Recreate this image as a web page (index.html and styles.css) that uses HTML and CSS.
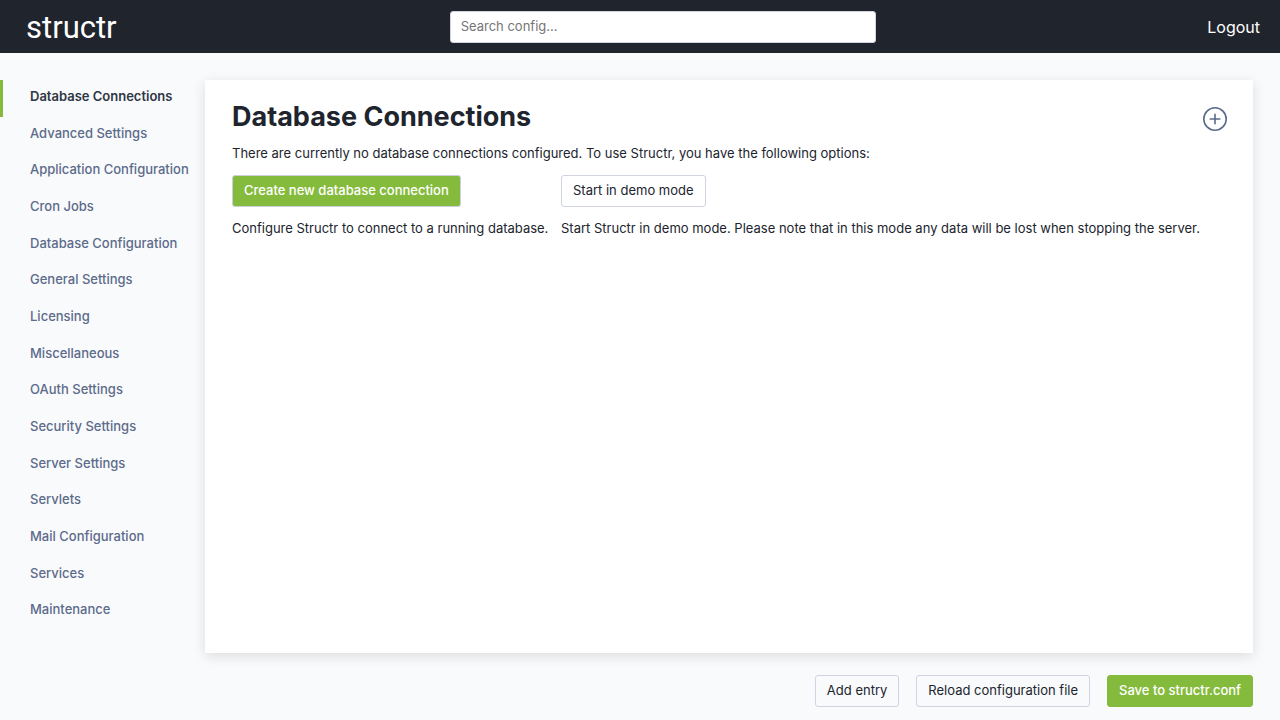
FILE: index.html
```html
<!DOCTYPE html>
<html lang="en">
<head>
<meta charset="utf-8">
<meta name="viewport" content="width=device-width, initial-scale=1">
<title>Structr Configuration</title>
<link rel="stylesheet" href="styles.css">
</head>
<body>
<header class="header">
  <svg class="logo" viewBox="0 0 92 44" role="img" aria-label="structr"><text class="logo-text" x="0" y="33">structr</text></svg>
  <input class="search" type="text" placeholder="Search config..." aria-label="Search config">
  <a class="logout" href="#">Logout</a>
</header>
<div class="body">
  <nav class="sidebar">
    <ul class="menu">
      <li class="menu-item active"><a href="#">Database Connections</a></li>
      <li class="menu-item"><a href="#">Advanced Settings</a></li>
      <li class="menu-item"><a href="#">Application Configuration</a></li>
      <li class="menu-item"><a href="#">Cron Jobs</a></li>
      <li class="menu-item"><a href="#">Database Configuration</a></li>
      <li class="menu-item"><a href="#">General Settings</a></li>
      <li class="menu-item"><a href="#">Licensing</a></li>
      <li class="menu-item"><a href="#">Miscellaneous</a></li>
      <li class="menu-item"><a href="#">OAuth Settings</a></li>
      <li class="menu-item"><a href="#">Security Settings</a></li>
      <li class="menu-item"><a href="#">Server Settings</a></li>
      <li class="menu-item"><a href="#">Servlets</a></li>
      <li class="menu-item"><a href="#">Mail Configuration</a></li>
      <li class="menu-item"><a href="#">Services</a></li>
      <li class="menu-item"><a href="#">Maintenance</a></li>
    </ul>
  </nav>
  <main class="main">
    <section class="panel">
      <div class="panel-head">
        <h1 class="title">Database Connections</h1>
        <button class="add" type="button" aria-label="Add connection">
          <svg width="26" height="26" viewBox="0 0 26 26" fill="none" stroke="currentColor" stroke-width="1.6" stroke-linecap="round"><circle cx="13" cy="13" r="11.2"/><path d="M13 8.2v9.6M8.2 13h9.6"/></svg>
        </button>
      </div>
      <p class="intro">There are currently no database connections configured. To use Structr, you have the following options:</p>
      <div class="options">
        <div class="option">
          <button class="button primary outlined" type="button">Create new database connection</button>
          <p>Configure Structr to connect to a running database.</p>
        </div>
        <div class="option">
          <button class="button" type="button">Start in demo mode</button>
          <p>Start Structr in demo mode. Please note that in this mode any data will be lost when stopping the server.</p>
        </div>
      </div>
    </section>
    <footer class="actions">
      <button class="button" type="button">Add entry</button>
      <button class="button" type="button">Reload configuration file</button>
      <button class="button primary" type="button">Save to structr.conf</button>
    </footer>
  </main>
</div>
</body>
</html>
```
FILE: styles.css
```css
* {
  box-sizing: border-box;
}

body {
  margin: 0;
  min-height: 100vh;
  display: flex;
  flex-direction: column;
  background: #f9fafc;
  color: #20242d;
  font: 13px/16px Inter, sans-serif;
}

.header {
  display: flex;
  justify-content: space-between;
  align-items: center;
  height: 53px;
  padding: 0 20px 0 26px;
  background: #20242d;
}

.logo {
  width: 92px;
  height: 44px;
}

.logo-text {
  font: 31px Roboto, sans-serif;
  fill: #fff;
}

.search {
  width: 426px;
  height: 32px;
  padding: 0 10px 2px;
  border: 1px solid #cfd4e2;
  border-radius: 3px;
  background: #fff;
  color: inherit;
  font: inherit;
}

.search::placeholder {
  color: #757575;
}

.logout {
  color: #fff;
  font-size: 16px;
  line-height: 20px;
  text-decoration: none;
}

.body {
  flex: 1;
  display: flex;
}

.sidebar {
  flex: 0 0 205px;
  padding-top: 27px;
}

.menu {
  display: flex;
  flex-direction: column;
  min-height: 550px;
  margin: 0;
  padding: 0;
  list-style: none;
}

.menu-item {
  flex: 1;
  padding: 8px 0 8px 27px;
  border-left: 3px solid transparent;
  font-weight: 500;
  white-space: nowrap;
}

.menu-item a {
  color: #5c6b8a;
  text-decoration: none;
}

.menu-item.active {
  border-color: #85bb3c;
  font-weight: 600;
}

.menu-item.active a {
  color: #2f3644;
}

.main {
  flex: 1;
  min-width: 0;
  display: flex;
  flex-direction: column;
  padding: 27px 27px 13px 0;
}

.panel {
  flex: 1;
  padding: 20px 25px 20px 27px;
  background: #fff;
  box-shadow: 0 3px 12px rgba(0, 0, 0, 0.12);
}

.panel-head {
  display: flex;
  justify-content: space-between;
  align-items: center;
}

.title {
  margin: 0;
  font-size: 27px;
  line-height: 34px;
  font-weight: 700;
}

.add {
  display: flex;
  margin: 4px 0 0;
  padding: 0;
  border: 0;
  background: none;
  color: #5c6b8a;
}

.intro {
  margin: 11px 0 14px;
}

.options {
  display: grid;
  grid-template-columns: minmax(auto, 325px) 1fr;
  gap: 4px;
}

.option p {
  margin: 13px 0 0;
}

.button {
  height: 32px;
  padding: 0 11px 2px;
  border: 1px solid #d0d4e2;
  border-radius: 3px;
  background: transparent;
  color: inherit;
  font: inherit;
  white-space: nowrap;
}

.primary {
  border-color: #85bb3c;
  background: #85bb3c;
  color: #fff;
  font-weight: 500;
}

.outlined {
  border-color: #cbd0dc;
}

.actions {
  display: flex;
  justify-content: flex-end;
  gap: 17px;
  margin-top: 22px;
}
```
